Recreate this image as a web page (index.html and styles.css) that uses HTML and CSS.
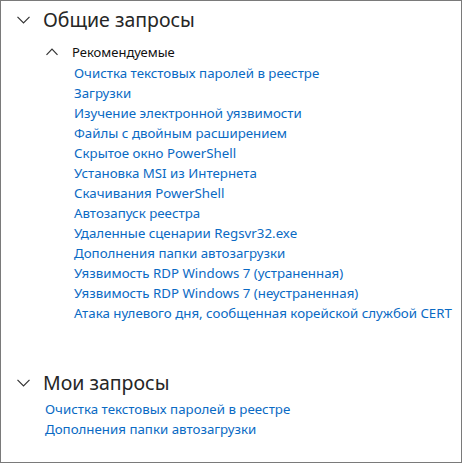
FILE: index.html
```html
<!DOCTYPE html>
<html lang="ru">
<head>
<meta charset="utf-8">
<link rel="stylesheet" href="styles.css">
</head>
<body>
<div class="panel">
  <section class="group">
    <div class="group-head">
      <svg class="chev-down" width="13" height="8" viewBox="0 0 13 8"><path d="M0.5 0.8 L6.5 6.8 L12.5 0.8" fill="none" stroke="#333" stroke-width="1.2"/></svg>
      <span class="group-title">Общие запросы</span>
    </div>
    <div class="sub-head">
      <svg class="chev-up" width="12" height="8" viewBox="0 0 12 8"><path d="M0.5 6.8 L6 1.2 L11.5 6.8" fill="none" stroke="#333" stroke-width="1.2"/></svg>
      <span class="sub-title">Рекомендуемые</span>
    </div>
    <ul class="links links-rec">
      <li><a href="#">Очистка текстовых паролей в реестре</a></li>
      <li><a href="#">Загрузки</a></li>
      <li><a href="#">Изучение электронной уязвимости</a></li>
      <li><a href="#">Файлы с двойным расширением</a></li>
      <li><a href="#">Скрытое окно PowerShell</a></li>
      <li><a href="#">Установка MSI из Интернета</a></li>
      <li><a href="#">Скачивания PowerShell</a></li>
      <li><a href="#">Автозапуск реестра</a></li>
      <li><a href="#">Удаленные сценарии Regsvr32.exe</a></li>
      <li><a href="#">Дополнения папки автозагрузки</a></li>
      <li><a href="#">Уязвимость RDP Windows 7 (устраненная)</a></li>
      <li><a href="#">Уязвимость RDP Windows 7 (неустраненная)</a></li>
      <li><a href="#">Атака нулевого дня, сообщенная корейской службой CERT</a></li>
    </ul>
  </section>
  <section class="group group-mine">
    <div class="group-head">
      <svg class="chev-down" width="13" height="8" viewBox="0 0 13 8"><path d="M0.5 0.8 L6.5 6.8 L12.5 0.8" fill="none" stroke="#333" stroke-width="1.2"/></svg>
      <span class="group-title">Мои запросы</span>
    </div>
    <ul class="links links-mine">
      <li><a href="#">Очистка текстовых паролей в реестре</a></li>
      <li><a href="#">Дополнения папки автозагрузки</a></li>
    </ul>
  </section>
</div>
</body>
</html>
```
FILE: styles.css
```css
html, body {
  margin: 0;
  padding: 0;
  background: #fff;
}
body {
  font-family: "Noto Sans", "Open Sans", sans-serif;
  color: #222;
}
.panel {
  box-sizing: border-box;
  width: 462px;
  height: 463px;
  border: 1px solid #7a7a7a;
  background: #fff;
}
.group-head {
  display: flex;
  align-items: center;
  height: 24px;
  margin-top: 7px;
  padding-left: 16px;
  gap: 13px;
}
.group-title {
  font-size: 19.5px;
  line-height: 24px;
  color: #262626;
}
.sub-head {
  display: flex;
  align-items: center;
  height: 20px;
  margin-top: 10px;
  padding-left: 45px;
  gap: 14px;
}
.sub-title {
  font-size: 13px;
  line-height: 20px;
  color: #111;
}
.links {
  list-style: none;
  margin: 0;
  padding: 0;
}
.links li {
  font-size: 13.3px;
  line-height: 20px;
  white-space: nowrap;
}
.links a {
  color: #0a6ac4;
  text-decoration: none;
}
.links-rec {
  margin-top: 1px;
  padding-left: 73px;
}
.group-mine {
  margin-top: 48px;
}
.group-mine .group-head {
  margin-top: 0;
}
.links-mine {
  margin-top: 4px;
  padding-left: 44px;
}
```
